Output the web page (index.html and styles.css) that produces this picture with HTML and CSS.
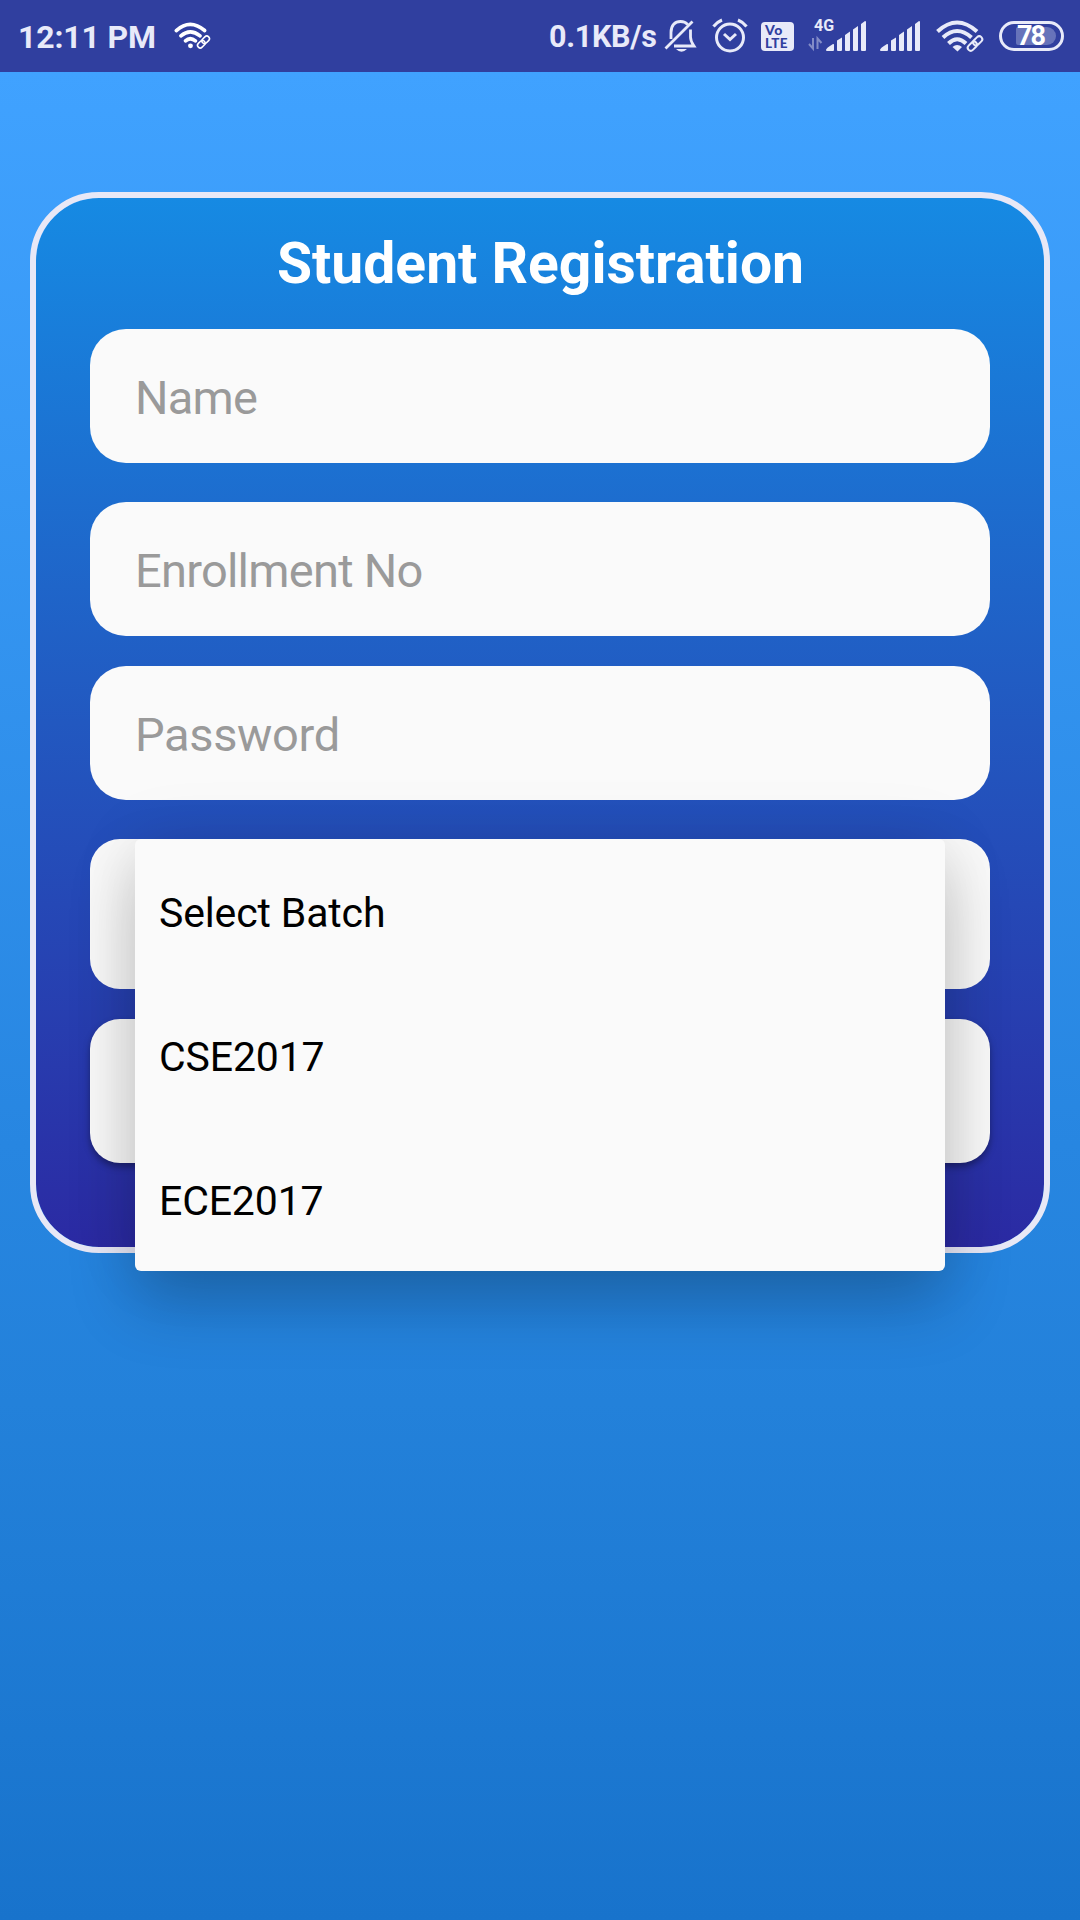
FILE: index.html
```html
<!DOCTYPE html>
<html lang="en">
<head>
<meta charset="utf-8">
<title>Student Registration</title>
<link rel="stylesheet" href="styles.css">
</head>
<body>
<header class="status">
  <span class="clock">12:11 PM</span>
  <svg class="wifi-small" width="36" height="27" viewBox="0 0 47 35">
    <g fill="none" stroke="currentColor" stroke-width="4.800" stroke-linecap="round"><path d="M3 11Q21-5 40 11M9 18Q21 7.500 34 18M15 24.500Q21 19 28 24.500"/></g>
    <circle cx="21.500" cy="31" r="3.200"/>
    <g class="link" transform="translate(38.500 26) rotate(-45)"><rect x="-9.500" y="-3.500" width="11" height="7" rx="3.500"/><rect x="-1.500" y="-3.500" width="11" height="7" rx="3.500"/></g>
  </svg>
  <span class="speed">0.1KB/s</span>
  <svg class="bell" width="32" height="34" viewBox="0 0 32 34">
    <g fill="none" stroke="currentColor" stroke-width="2.800"><path d="M7 20V13.500C7 6 11 2.500 16.500 2.500C19.500 2.500 22 3.500 23.500 5.500M26.500 10.500V18C26.500 22 28 24 30 27H10M1.500 29.500L28.500 2.500"/></g>
    <path d="M12 30h11q-5.500 5.500-11 0z"/>
  </svg>
  <svg class="alarm" width="36" height="36" viewBox="0 0 36 36">
    <g fill="none" stroke="currentColor" stroke-width="3"><circle cx="18" cy="19.500" r="13.500"/><path d="M12 16L18 21.500L24 16"/><path d="M1.500 8.500Q5 4 10 2M34.500 8.500Q31 4 26 2"/></g>
  </svg>
  <span class="volte"><span class="volte-top">Vo</span><span class="volte-bottom">LTE</span></span>
  <span class="network">
    <span class="network-type">4G</span>
    <svg class="traffic" width="13" height="13" viewBox="0 0 13 13"><path d="M0 7l4 4.500V1M12.500 6L8.500 1.500V12" fill="none" stroke="currentColor" stroke-width="2"/></svg>
  </span>
  <svg class="signal" width="41" height="30" viewBox="0 0 41 30"><path d="M0 29q0-2 7-6q1-.5 1 1v5q0 1-1 1H1q-1 0-1-1zM11 19.500l5-3V29q0 1-1 1h-3q-1 0-1-1zM19 14l5-3.500V29q0 1-1 1h-3q-1 0-1-1zM27 8.500l5-3.500V29q0 1-1 1h-3q-1 0-1-1zM35 3l4-3q1 0 1 1v28q0 1-1 1h-3q-1 0-1-1z"/></svg>
  <svg class="signal second" width="41" height="30" viewBox="0 0 41 30"><path d="M0 29q0-2 7-6q1-.5 1 1v5q0 1-1 1H1q-1 0-1-1zM11 19.500l5-3V29q0 1-1 1h-3q-1 0-1-1zM19 14l5-3.500V29q0 1-1 1h-3q-1 0-1-1zM27 8.500l5-3.500V29q0 1-1 1h-3q-1 0-1-1zM35 3l4-3q1 0 1 1v28q0 1-1 1h-3q-1 0-1-1z"/></svg>
  <svg class="wifi" width="47" height="32" viewBox="0 0 47 32">
    <g fill="none" stroke="currentColor" stroke-width="4"><path d="M1.500 11.500Q21-6.500 41 11.500M7 17.500Q21 4.500 35.500 17.500M12.500 23.500Q21 15 30 23.500"/></g>
    <path d="M16.500 27Q21 23 26 27L21.500 31.500z"/>
    <g class="link" transform="translate(39 23.500) rotate(-45)"><rect x="-9" y="-3" width="10.500" height="6" rx="3"/><rect x="-1.500" y="-3" width="10.500" height="6" rx="3"/></g>
  </svg>
  <span class="battery"><span class="battery-level">78</span></span>
</header>
<main class="screen">
  <form class="card">
    <h1 class="title">Student Registration</h1>
    <input class="field name" type="text" placeholder="Name">
    <input class="field enrollment" type="text" placeholder="Enrollment No">
    <input class="field password" type="password" placeholder="Password">
    <div class="spinner">
      <ul class="menu">
        <li class="option">Select Batch</li>
        <li class="option">CSE2017</li>
        <li class="option">ECE2017</li>
      </ul>
    </div>
    <button class="submit" type="button" aria-label="Register"></button>
  </form>
</main>
</body>
</html>
```
FILE: styles.css
```css
* { box-sizing: border-box; }
body {
  margin: 0;
  height: 1920px;
  display: flex;
  flex-direction: column;
  overflow: hidden;
  font-family: Roboto, sans-serif;
}
.status {
  height: 72px;
  flex: none;
  display: flex;
  align-items: flex-start;
  background: #303f9f;
  color: #e8eaf9;
}
.status svg { flex: none; fill: currentColor; display: block; overflow: visible; }
.clock, .speed { flex: none; font-weight: 700; line-height: 36px; white-space: nowrap; }
.clock { width: 156px; margin: 19px 0 0 18px; font-size: 32px; letter-spacing: -.15px; }
.wifi-small { margin-top: 22px; color: #fff; }
.link { fill: none; stroke: currentColor; stroke-width: 2; }
.speed { width: 114px; margin: 19px 0 0 339px; font-size: 30.5px; letter-spacing: -.3px; }
.bell { margin-top: 19px; margin-left: 1px; }
.alarm { margin: 18px 0 0 16px; }
.volte {
  flex: none;
  width: 33px;
  height: 29px;
  margin: 22px 0 0 13px;
  border-radius: 4px;
  background: #e8eaf9;
  color: #303f9f;
  display: flex;
  flex-direction: column;
  font-family: Lato, sans-serif;
  font-weight: 900;
}
.volte-top { height: 14px; padding-left: 4px; font-size: 14px; line-height: 16px; letter-spacing: .5px; }
.volte-bottom { height: 15px; padding-left: 4px; font-size: 13.5px; line-height: 15px; letter-spacing: .4px; }
.network { flex: none; width: 18px; height: 50px; padding-top: 17px; display: flex; flex-direction: column; margin-left: 19px; }
.network-type { font-size: 16px; line-height: 18px; font-weight: 700; margin-left: -3px; height: 21px; padding-left: 4px; white-space: nowrap; }
.traffic { opacity: .45; margin-left: -4px; }
.signal { margin: 21px 0 0 -5px; }
.signal.second { margin-left: 13px; }
.wifi { margin: 20px 0 0 15px; }
.battery {
  flex: none;
  width: 65px;
  height: 30px;
  margin: 21px 0 0 16px;
  border: 3px solid #e8eaf9;
  border-radius: 15px;
  padding: 3px 5px 3px 14px;
}
.battery-level {
  display: block;
  height: 18px;
  border-radius: 2px 9px 9px 2px;
  background: rgba(232, 234, 249, .3);
  color: #fff;
  font-size: 27px;
  font-weight: 700;
  line-height: 19px;
  padding-left: 1px;
  letter-spacing: -2px;
}
.screen {
  flex: 1;
  padding: 120px 30px 0;
  background: linear-gradient(180deg, #40a2ff 0%, #2786e1 58%, #2381da 72%, #1873cc 100%);
}
.card {
  height: 1061px;
  border: 6px solid #e8e8f6;
  border-radius: 69px;
  padding: 32px 54px 0;
  display: flex;
  flex-direction: column;
  background: linear-gradient(180deg, #168ae3 0%, #2258c0 50%, #2b2aa3 100%) padding-box;
}
.title {
  margin: 0;
  height: 99px;
  padding-left: 1px;
  color: #fff;
  font-size: 57px;
  font-weight: 700;
  line-height: 68px;
  text-align: center;
}
.field {
  width: 100%;
  height: 134px;
  border: 0;
  border-radius: 36px;
  padding: 2px 45px 0;
  background: #fafafa;
  font: 400 47px Roboto, sans-serif;
  letter-spacing: -.75px;
  outline: 0;
}
.field::placeholder { color: #9a9a9a; opacity: 1; }
.enrollment { margin-top: 39px; }
.password { margin-top: 30px; letter-spacing: -.35px; }
.spinner {
  position: relative;
  z-index: 1;
  height: 150px;
  flex: none;
  margin-top: 39px;
  border-radius: 30px;
}
.spinner, .submit { background: #fafafa; }
.submit {
  height: 144px;
  flex: none;
  margin-top: 30px;
  border: 0;
  border-radius: 30px;
  box-shadow: 0 4px 7px rgba(0, 0, 0, .35);
}
.menu {
  position: absolute;
  top: 0;
  left: 45px;
  width: 810px;
  margin: 0;
  padding: 0;
  list-style: none;
  border-radius: 6px;
  background: #fafafa;
  box-shadow: 0 32px 66px rgba(0, 0, 0, .22), 0 0 70px rgba(0, 0, 0, .08);
}
.option {
  height: 144px;
  padding: 2px 24px 0;
  line-height: 144px;
  font-size: 41px;
  letter-spacing: -.15px;
  color: #000;
}
```
